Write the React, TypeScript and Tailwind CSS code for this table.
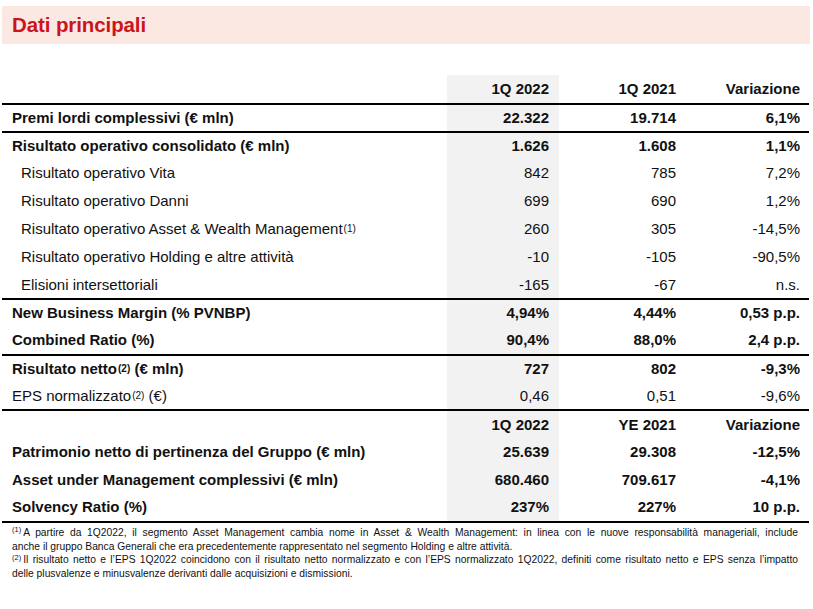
type Row = {
  label: string;
  sup?: string;
  tail?: string;
  bold?: boolean;
  indent?: boolean;
  border?: boolean;
  values: [string, string, string];
};

const rows: Row[] = [
  { label: "Premi lordi complessivi (€ mln)", bold: true, border: true, values: ["22.322", "19.714", "6,1%"] },
  { label: "Risultato operativo consolidato (€ mln)", bold: true, border: true, values: ["1.626", "1.608", "1,1%"] },
  { label: "Risultato operativo Vita", indent: true, values: ["842", "785", "7,2%"] },
  { label: "Risultato operativo Danni", indent: true, values: ["699", "690", "1,2%"] },
  { label: "Risultato operativo Asset & Wealth Management", sup: "(1)", indent: true, values: ["260", "305", "-14,5%"] },
  { label: "Risultato operativo Holding e altre attività", indent: true, values: ["-10", "-105", "-90,5%"] },
  { label: "Elisioni intersettoriali", indent: true, values: ["-165", "-67", "n.s."] },
  { label: "New Business Margin (% PVNBP)", bold: true, border: true, values: ["4,94%", "4,44%", "0,53 p.p."] },
  { label: "Combined Ratio (%)", bold: true, values: ["90,4%", "88,0%", "2,4 p.p."] },
  { label: "Risultato netto", sup: "(2)", tail: " (€ mln)", bold: true, border: true, values: ["727", "802", "-9,3%"] },
  { label: "EPS normalizzato", sup: "(2)", tail: " (€)", values: ["0,46", "0,51", "-9,6%"] },
  { label: "", bold: true, border: true, values: ["1Q 2022", "YE 2021", "Variazione"] },
  { label: "Patrimonio netto di pertinenza del Gruppo (€ mln)", bold: true, values: ["25.639", "29.308", "-12,5%"] },
  { label: "Asset under Management complessivi (€ mln)", bold: true, values: ["680.460", "709.617", "-4,1%"] },
  { label: "Solvency Ratio (%)", bold: true, values: ["237%", "227%", "10 p.p."] },
];

const TableRow = ({ row }: { row: Row }) => {
  return (
    <div
      className={`grid grid-cols-[445px_112px_127px_1fr] h-[27.86px] items-center ${row.border ? "border-t-2 border-black" : ""} ${row.bold ? "font-bold" : ""}`}
    >
      <div className={`h-full flex items-center whitespace-nowrap ${row.indent ? "pl-[19px]" : "pl-[10px]"}`}>
        <span>
          {row.label}
          {row.sup && <sup className="text-[10px] relative top-[-2px] ml-[1px]">{row.sup}</sup>}
          {row.tail}
        </span>
      </div>
      <div className="h-full flex items-center justify-end pr-[10px] bg-[#f2f2f2]">{row.values[0]}</div>
      <div className="h-full flex items-center justify-end pr-[10px]">{row.values[1]}</div>
      <div className="h-full flex items-center justify-end pr-[9px]">{row.values[2]}</div>
    </div>
  );
};

export default function App() {
  return (
    <div className="w-[813px] h-[609px] bg-white text-[#111] font-['Liberation_Sans',Arial,sans-serif] pt-[6px] px-[2px] overflow-hidden">
      <div className="h-[38px] w-[808px] bg-[#fce8e3] flex items-center pl-[10px]">
        <h1 className="text-[20.5px] font-bold text-[#cc141c] tracking-[-0.1px]">Dati principali</h1>
      </div>

      <div className="mt-[31px] w-[807px] text-[15px] leading-none">
        <div className="grid grid-cols-[445px_112px_127px_1fr] h-[28px] items-center font-bold">
          <div />
          <div className="h-full flex items-center justify-end pr-[10px] bg-[#f2f2f2] pb-[2px]">1Q 2022</div>
          <div className="h-full flex items-center justify-end pr-[10px] pb-[2px]">1Q 2021</div>
          <div className="h-full flex items-center justify-end pr-[9px] pb-[2px]">Variazione</div>
        </div>
        {rows.map((r, i) => (
          <TableRow key={i} row={r} />
        ))}
        <div className="border-t-2 border-black" />
      </div>

      <div className="mt-[3px] w-[796px] pl-[10px] text-[10.3px] leading-[13.7px] font-['Liberation_Sans',Arial,sans-serif] text-[#111]">
        <div className="text-justify [text-align-last:justify]">
          <sup className="text-[7.5px] mr-[2px]">(1)</sup>A partire da 1Q2022, il segmento Asset Management cambia nome in Asset &amp; Wealth Management: in linea con le nuove responsabilità manageriali, include
        </div>
        <div>anche il gruppo Banca Generali che era precedentemente rappresentato nel segmento Holding e altre attività.</div>
        <div className="text-justify [text-align-last:justify]">
          <sup className="text-[7.5px] mr-[2px]">(2)</sup>Il risultato netto e l’EPS 1Q2022 coincidono con il risultato netto normalizzato e con l’EPS normalizzato 1Q2022, definiti come risultato netto e EPS senza l’impatto
        </div>
        <div>delle plusvalenze e minusvalenze derivanti dalle acquisizioni e dismissioni.</div>
      </div>
    </div>
  );
}
